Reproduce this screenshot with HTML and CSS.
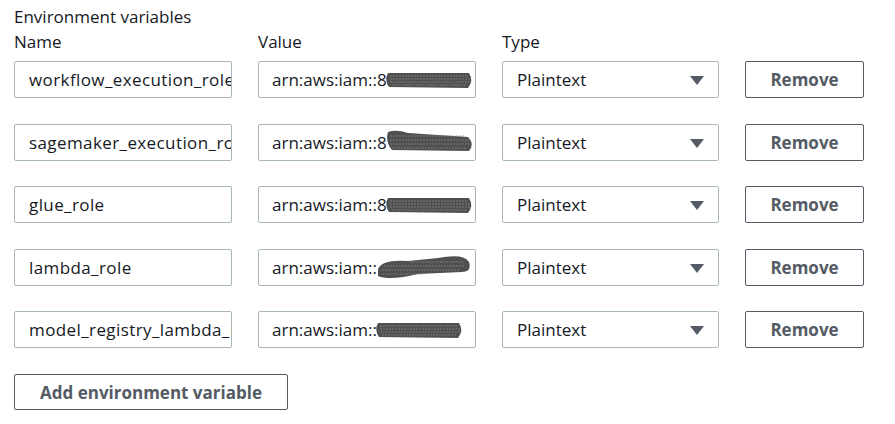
FILE: index.html
```html
<!DOCTYPE html>
<html>
<head>
<meta charset="utf-8">
<link rel="stylesheet" href="styles.css">
</head>
<body>
<div class="panel">
  <div class="title">Environment variables</div>
  <div class="grid">
    <div class="label">Name</div>
    <div class="label">Value</div>
    <div class="label">Type</div>
    <div></div>

    <div class="field name">workflow_execution_role</div>
    <div class="field value">arn:aws:iam::8<svg class="scrib" width="90" height="24" viewBox="0 0 90 24"><path d="M4 5 Q0 12 5 19 L84 20 Q90 13 85 5 Z" fill="#505050"/><path d="M6 8 H84 M6 11 H86 M6 14 H86 M8 17 H82" stroke="#8a8a8a" stroke-width="0.7" stroke-dasharray="2 1"/></svg></div>
    <div class="field select">Plaintext<span class="caret"></span></div>
    <button class="btn">Remove</button>

    <div class="field name">sagemaker_execution_role</div>
    <div class="field value">arn:aws:iam::8<svg class="scrib" width="90" height="26" viewBox="0 0 90 26"><path d="M4 3 Q12 0 24 4 L84 8 Q91 15 85 22 L8 21 Q1 13 4 3 Z" fill="#505050"/><path d="M6 7 H80 M6 11 H86 M6 15 H86 M8 19 H82" stroke="#8a8a8a" stroke-width="0.7" stroke-dasharray="2 1"/></svg></div>
    <div class="field select">Plaintext<span class="caret"></span></div>
    <button class="btn">Remove</button>

    <div class="field name">glue_role</div>
    <div class="field value">arn:aws:iam::8<svg class="scrib" width="90" height="24" viewBox="0 0 90 24"><path d="M4 5 Q0 12 5 19 L84 20 Q90 13 85 5 Z" fill="#505050"/><path d="M6 8 H84 M6 11 H86 M6 14 H86 M8 17 H82" stroke="#8a8a8a" stroke-width="0.7" stroke-dasharray="2 1"/></svg></div>
    <div class="field select">Plaintext<span class="caret"></span></div>
    <button class="btn">Remove</button>

    <div class="field name">lambda_role</div>
    <div class="field value">arn:aws:iam::<svg class="scrib" width="98" height="28" viewBox="0 0 98 28"><path d="M4 16 Q8 6 34 8 L64 5 Q90 0 95 9 Q98 19 88 19 L44 21 Q16 28 4 23 Z" fill="#505050"/><path d="M10 13 H90 M8 17 H86 M8 21 H50 M36 9 H90" stroke="#8a8a8a" stroke-width="0.7" stroke-dasharray="2 1"/></svg></div>
    <div class="field select">Plaintext<span class="caret"></span></div>
    <button class="btn">Remove</button>

    <div class="field name">model_registry_lambda_role</div>
    <div class="field value">arn:aws:iam::<svg class="scrib" width="92" height="24" viewBox="0 0 92 24"><path d="M4 5 Q0 12 5 19 L84 20 Q90 13 85 5 Z" fill="#505050"/><path d="M6 8 H84 M6 11 H86 M6 14 H86 M8 17 H82" stroke="#8a8a8a" stroke-width="0.7" stroke-dasharray="2 1"/></svg></div>
    <div class="field select">Plaintext<span class="caret"></span></div>
    <button class="btn">Remove</button>
  </div>
  <button class="btn add">Add environment variable</button>
</div>
</body>
</html>
```

FILE: styles.css
```css
html, body {
  margin: 0;
  background: #ffffff;
}
body {
  font-family: "Open Sans", "Noto Sans", sans-serif;
  font-size: 17px;
  color: #16191f;
}
.panel {
  padding: 6px 0 0 14px;
}
.title {
  line-height: 22px;
  height: 22px;
}
.grid {
  display: grid;
  grid-template-columns: 218px 218px 217px 119px;
  column-gap: 26px;
  row-gap: 25.5px;
}
.label {
  line-height: 22px;
  margin-top: 3px;
  margin-bottom: -17.5px;
}
.field {
  box-sizing: border-box;
  height: 37px;
  border: 1px solid #aab7b8;
  border-radius: 2px;
  padding: 0 4px 0 14px;
  display: flex;
  align-items: center;
  white-space: nowrap;
  overflow: hidden;
}
.name {
  letter-spacing: 0.4px;
}
.value {
  padding-left: 13px;
}
.scrib {
  flex: none;
  margin-left: -3px;
}
.select {
  justify-content: space-between;
  padding-right: 14px;
}
.caret {
  width: 0;
  height: 0;
  border-left: 7px solid transparent;
  border-right: 7px solid transparent;
  border-top: 9px solid #545b64;
  margin-top: 2px;
}
.btn {
  box-sizing: border-box;
  height: 37px;
  border: 1px solid #545b64;
  border-radius: 2px;
  background: #ffffff;
  color: #545b64;
  font-family: "Open Sans", "Noto Sans", sans-serif;
  font-size: 17px;
  font-weight: 700;
  padding: 0;
  display: flex;
  align-items: center;
  justify-content: center;
}
.add {
  margin-top: 26px;
  width: 274px;
  height: 36px;
}
```
